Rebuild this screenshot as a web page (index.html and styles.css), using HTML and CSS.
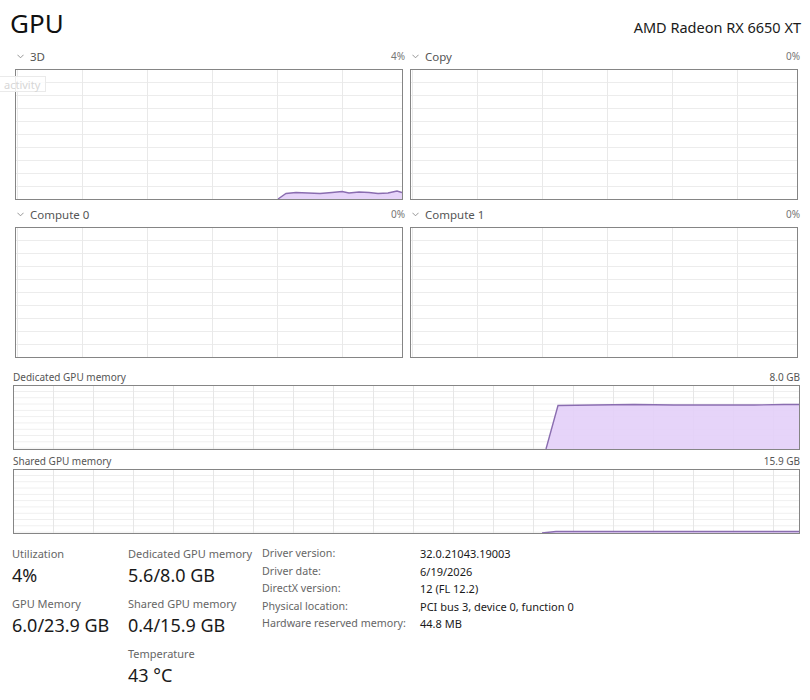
FILE: index.html
```html
<!DOCTYPE html>
<html lang="en">
<head>
    <meta charset="UTF-8">
    <meta name="viewport" content="width=device-width, initial-scale=1.0">
    <title>GPU</title>
    <link rel="stylesheet" href="styles.css">
</head>
<body>
    <div class="page">
        <div class="head">
            <h1>GPU</h1>
            <div class="device">AMD Radeon RX 6650 XT</div>
        </div>

        <!-- Engine graphs -->
        <div class="engines">
            <div class="engine">
                <div class="eng-head">
                    <span class="eng-name"><svg class="chev" viewBox="0 0 8 5"><path d="M0.5 0.5 L4 4 L7.5 0.5" /></svg>3D</span>
                    <span class="pct">4%</span>
                </div>
                <div class="graph g-engine">
                    <svg viewBox="0 0 386 129" preserveAspectRatio="none">
                        <path class="fill" d="M262,129 L270,123.5 L280,122.5 L292,123 L304,123.5 L316,122.5 L326,121.5 L333,123 L343,122 L353,122.5 L362,123.5 L372,123 L381,121 L386,122.5 L386,129 Z" />
                        <path class="line" d="M262,129 L270,123.5 L280,122.5 L292,123 L304,123.5 L316,122.5 L326,121.5 L333,123 L343,122 L353,122.5 L362,123.5 L372,123 L381,121 L386,122.5" />
                    </svg>
                </div>
            </div>
            <div class="engine">
                <div class="eng-head">
                    <span class="eng-name"><svg class="chev" viewBox="0 0 8 5"><path d="M0.5 0.5 L4 4 L7.5 0.5" /></svg>Copy</span>
                    <span class="pct">0%</span>
                </div>
                <div class="graph g-engine"></div>
            </div>
            <div class="engine">
                <div class="eng-head">
                    <span class="eng-name"><svg class="chev" viewBox="0 0 8 5"><path d="M0.5 0.5 L4 4 L7.5 0.5" /></svg>Compute 0</span>
                    <span class="pct">0%</span>
                </div>
                <div class="graph g-engine"></div>
            </div>
            <div class="engine">
                <div class="eng-head">
                    <span class="eng-name"><svg class="chev" viewBox="0 0 8 5"><path d="M0.5 0.5 L4 4 L7.5 0.5" /></svg>Compute 1</span>
                    <span class="pct">0%</span>
                </div>
                <div class="graph g-engine"></div>
            </div>
        </div>

        <!-- Memory graphs -->
        <div class="mem">
            <div class="mem-head">
                <span>Dedicated GPU memory</span>
                <span>8.0 GB</span>
            </div>
            <div class="graph g-mem">
                <svg viewBox="0 0 785 63" preserveAspectRatio="none">
                    <path class="fill" d="M532,63 L544,19.5 L580,19 L620,18.5 L660,19 L700,19 L740,19 L770,18.5 L785,18.5 L785,63 Z" />
                    <path class="line" d="M532,63 L544,19.5 L580,19 L620,18.5 L660,19 L700,19 L740,19 L770,18.5 L785,18.5" />
                </svg>
            </div>
        </div>
        <div class="mem mem-shared">
            <div class="mem-head">
                <span>Shared GPU memory</span>
                <span>15.9 GB</span>
            </div>
            <div class="graph g-mem">
                <svg viewBox="0 0 785 63" preserveAspectRatio="none">
                    <path class="fill" d="M528,63 L542,61.5 L785,61.5 L785,63 Z" />
                    <path class="line" d="M528,63 L542,61.5 L785,61.5" />
                </svg>
            </div>
        </div>

        <!-- Stats -->
        <div class="stats">
            <div class="stat-col col-a">
                <div class="stat">
                    <div class="stat-label">Utilization</div>
                    <div class="stat-value">4%</div>
                </div>
                <div class="stat">
                    <div class="stat-label">GPU Memory</div>
                    <div class="stat-value">6.0/23.9 GB</div>
                </div>
            </div>
            <div class="stat-col col-b">
                <div class="stat">
                    <div class="stat-label">Dedicated GPU memory</div>
                    <div class="stat-value">5.6/8.0 GB</div>
                </div>
                <div class="stat">
                    <div class="stat-label">Shared GPU memory</div>
                    <div class="stat-value">0.4/15.9 GB</div>
                </div>
                <div class="stat">
                    <div class="stat-label">Temperature</div>
                    <div class="stat-value">43 °C</div>
                </div>
            </div>
            <div class="info">
                <span class="info-key">Driver version:</span><span class="info-val">32.0.21043.19003</span>
                <span class="info-key">Driver date:</span><span class="info-val">6/19/2026</span>
                <span class="info-key">DirectX version:</span><span class="info-val">12 (FL 12.2)</span>
                <span class="info-key">Physical location:</span><span class="info-val">PCI bus 3, device 0, function 0</span>
                <span class="info-key">Hardware reserved memory:</span><span class="info-val">44.8 MB</span>
            </div>
        </div>

        <div class="ghost">activity</div>
    </div>
</body>
</html>
```

FILE: styles.css
```css
body {
    margin: 0;
    background-color: #fff;
    font-family: "Noto Sans", "Open Sans", sans-serif;
    color: #1a1a1a;
}
.page {
    position: relative;
    width: 810px;
    height: 700px;
    padding: 0 0 0 13px;
    box-sizing: border-box;
    overflow: hidden;
}
.head {
    height: 49px;
    display: flex;
    justify-content: space-between;
    align-items: baseline;
    padding-right: 9px;
}
h1 {
    margin: 0 0 0 -3px;
    font-size: 26px;
    font-weight: 400;
    line-height: 46px;
    color: #111;
}
.device {
    font-size: 14.5px;
    color: #1a1a1a;
}
.engines {
    display: grid;
    grid-template-columns: 388px 388px;
    column-gap: 7px;
    row-gap: 7px;
    margin-left: 2px;
}
.eng-head {
    display: flex;
    justify-content: space-between;
    align-items: center;
    height: 14px;
    padding-bottom: 6px;
    font-size: 11.5px;
    color: #555;
}
.eng-name {
    display: flex;
    align-items: center;
}
.chev {
    width: 7px;
    height: 5px;
    margin: 0 6px 0 2px;
}
.chev path {
    fill: none;
    stroke: #888;
    stroke-width: 1;
}
.pct {
    font-size: 10px;
    color: #777;
    margin-right: -2px;
}
.graph {
    box-sizing: border-box;
    border: 1px solid #858585;
    background-color: #fff;
}
.graph svg {
    display: block;
    width: 100%;
    height: 100%;
}
.g-engine {
    height: 131px;
    background-image:
        linear-gradient(to right, #e9e9e9 1px, transparent 1px),
        linear-gradient(to bottom, #ececec 1px, transparent 1px);
    background-size: 65px 100%, 100% 13px;
    background-position: 66px 0, 0 12px;
}
.g-mem {
    height: 65px;
    width: 787px;
    background-image:
        linear-gradient(to right, #e6e6e6 1px, transparent 1px),
        linear-gradient(to bottom, #eeeeee 1px, transparent 1px);
    background-size: 40px 100%, 100% 6.3px;
    background-position: 39px 0, 0 5px;
}
.fill {
    fill: #e4d0f8;
    opacity: 0.92;
}
.line {
    fill: none;
    stroke: #8a6db0;
    stroke-width: 1.4;
    vector-effect: non-scaling-stroke;
}
.mem {
    margin-top: 13px;
}
.mem-shared {
    margin-top: 5px;
}
.mem-head {
    width: 787px;
    display: flex;
    justify-content: space-between;
    height: 12px;
    line-height: 12px;
    padding-bottom: 2px;
    font-size: 10px;
    color: #555;
}
.stats {
    display: flex;
    align-items: flex-start;
    margin-top: 11px;
}
.stat-col {
    display: flex;
    flex-direction: column;
    gap: 6px;
}
.col-a {
    width: 116px;
    margin-left: -1px;
}
.col-b {
    width: 134px;
}
.stat-label {
    font-size: 11px;
    line-height: 17px;
    color: #666;
}
.stat-value {
    font-size: 18px;
    line-height: 27px;
    color: #1a1a1a;
}
.info {
    display: grid;
    grid-template-columns: 158px auto;
    font-size: 10.7px;
    line-height: 17.5px;
}
.info-key {
    color: #666;
}
.info-val {
    font-size: 11px;
    color: #1a1a1a;
}
.ghost {
    position: absolute;
    left: -6px;
    top: 76px;
    width: 52px;
    height: 16px;
    border: 1px solid #eaeaea;
    background-color: rgba(255, 255, 255, 0.85);
    font-size: 11px;
    line-height: 16px;
    color: #d6d6d6;
    padding-left: 9px;
    box-sizing: border-box;
}
```
